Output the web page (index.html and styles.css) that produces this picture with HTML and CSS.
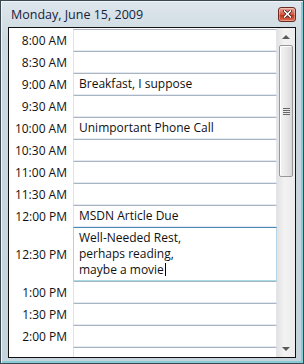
FILE: index.html
```html
<!DOCTYPE html>
<html>
<head>
    <title>Monday, June 15, 2009</title>
    <link rel="stylesheet" href="styles.css">
</head>
<body>
    <div class="window">
        <div class="titlebar">
            <span class="title">Monday, June 15, 2009</span>
            <button class="close" title="Close">
                <svg width="9" height="8" viewBox="0 0 9 8">
                    <path d="M1.5 1 L7.5 7 M7.5 1 L1.5 7" stroke="#3a1010" stroke-width="3" stroke-linecap="square"/>
                    <path d="M1.5 1 L7.5 7 M7.5 1 L1.5 7" stroke="#fff" stroke-width="1.6" stroke-linecap="square"/>
                </svg>
            </button>
        </div>

        <div class="client">
            <div class="schedule">
                <div class="slot"><span class="time">8:00 AM</span><div class="entry"></div></div>
                <div class="slot"><span class="time">8:30 AM</span><div class="entry"></div></div>
                <div class="slot"><span class="time">9:00 AM</span><div class="entry">Breakfast, I suppose</div></div>
                <div class="slot"><span class="time">9:30 AM</span><div class="entry"></div></div>
                <div class="slot"><span class="time">10:00 AM</span><div class="entry">Unimportant Phone Call</div></div>
                <div class="slot"><span class="time">10:30 AM</span><div class="entry"></div></div>
                <div class="slot"><span class="time">11:00 AM</span><div class="entry"></div></div>
                <div class="slot"><span class="time">11:30 AM</span><div class="entry"></div></div>
                <div class="slot"><span class="time">12:00 PM</span><div class="entry">MSDN Article Due</div></div>
                <div class="slot"><span class="time">12:30 PM</span><div class="entry focused">Well-Needed Rest,<br>perhaps reading,<br>maybe a movie<span class="caret"></span></div></div>
                <div class="slot"><span class="time">1:00 PM</span><div class="entry"></div></div>
                <div class="slot"><span class="time">1:30 PM</span><div class="entry"></div></div>
                <div class="slot"><span class="time">2:00 PM</span><div class="entry"></div></div>
                <div class="slot"><span class="time"></span><div class="entry"></div></div>
            </div>

            <div class="scrollbar">
                <div class="arrow up"></div>
                <div class="thumb">
                    <div class="grip"></div>
                </div>
                <div class="track"></div>
                <div class="arrow down"></div>
            </div>
        </div>
    </div>
</body>
</html>
```

FILE: styles.css
```css
body {
    margin: 0;
    font-family: "Open Sans", "Noto Sans", sans-serif;
    font-size: 12px;
    color: #000;
}

.window {
    width: 304px;
    height: 364px;
    box-sizing: border-box;
    display: flex;
    flex-direction: column;
    border: 1px solid #3b4850;
    background: linear-gradient(#dde6ec, #cdd9e0 40px, #c4d3dc);
    box-shadow: inset 1px 1px 0 #eef3f6, inset -2px -2px 0 #88cbd4;
}

/* Title bar */
.titlebar {
    height: 26px;
    display: flex;
    align-items: center;
    justify-content: space-between;
    padding: 0 7px 0 10px;
}

.title {
    color: #14223c;
    font-size: 12.5px;
}

.close {
    width: 18px;
    height: 15px;
    padding: 0;
    border: 1px solid #6b2a22;
    border-radius: 3px;
    background: linear-gradient(#eaa494, #d4563f 50%, #bb2e1b 51%, #dc6c4f);
    box-shadow: inset 0 0 0 1px rgba(255, 255, 255, 0.35);
    display: flex;
    align-items: center;
    justify-content: center;
}

/* Client area */
.client {
    flex: 1;
    display: flex;
    margin: 0 7px 5px 7px;
    border: 1px solid #111;
    background: white;
    overflow: hidden;
}

.schedule {
    flex: 1;
    padding-top: 1px;
    overflow: hidden;
}

.slot {
    display: grid;
    grid-template-columns: 64px 1fr;
    align-items: center;
}

.time {
    text-align: right;
    padding-right: 6px;
    color: #111;
}

.entry {
    min-height: 16px;
    line-height: 16px;
    padding: 2px 5px;
    border: 1px solid;
    border-color: #a9b5c2 #e2e6ec #e3e9ef #dde2e8;
    color: #111;
}

.entry.focused {
    border-color: #4a88b8 #b8d4e8 #a8dce4 #b4d0e6;
}

.caret {
    display: inline-block;
    width: 1px;
    height: 13px;
    margin-left: 1px;
    vertical-align: -2px;
    background: #000;
}

/* Scrollbar */
.scrollbar {
    width: 18px;
    display: flex;
    flex-direction: column;
    align-items: center;
    background: linear-gradient(to right, #e2e2e2, #f2f2f2 40%, #ececec);
}

.arrow {
    height: 17px;
    width: 100%;
    display: flex;
    align-items: center;
    justify-content: center;
}

.arrow::after {
    content: "";
    border-left: 4px solid transparent;
    border-right: 4px solid transparent;
}

.arrow.up::after {
    border-bottom: 4px solid #5a5a5a;
}

.arrow.down::after {
    border-top: 4px solid #5a5a5a;
}

.thumb {
    width: 14px;
    height: 132px;
    box-sizing: border-box;
    border: 1px solid #979797;
    border-radius: 2px;
    background: linear-gradient(to right, #f4f4f4, #e9e9e9 50%, #d8d8d8);
    box-shadow: inset 1px 1px 0 #fff;
    display: flex;
    align-items: center;
    justify-content: center;
}

.grip {
    width: 7px;
    height: 7px;
    background: repeating-linear-gradient(#666 0 1px, #e8e8e8 1px 2px);
}

.track {
    flex: 1;
}
```
